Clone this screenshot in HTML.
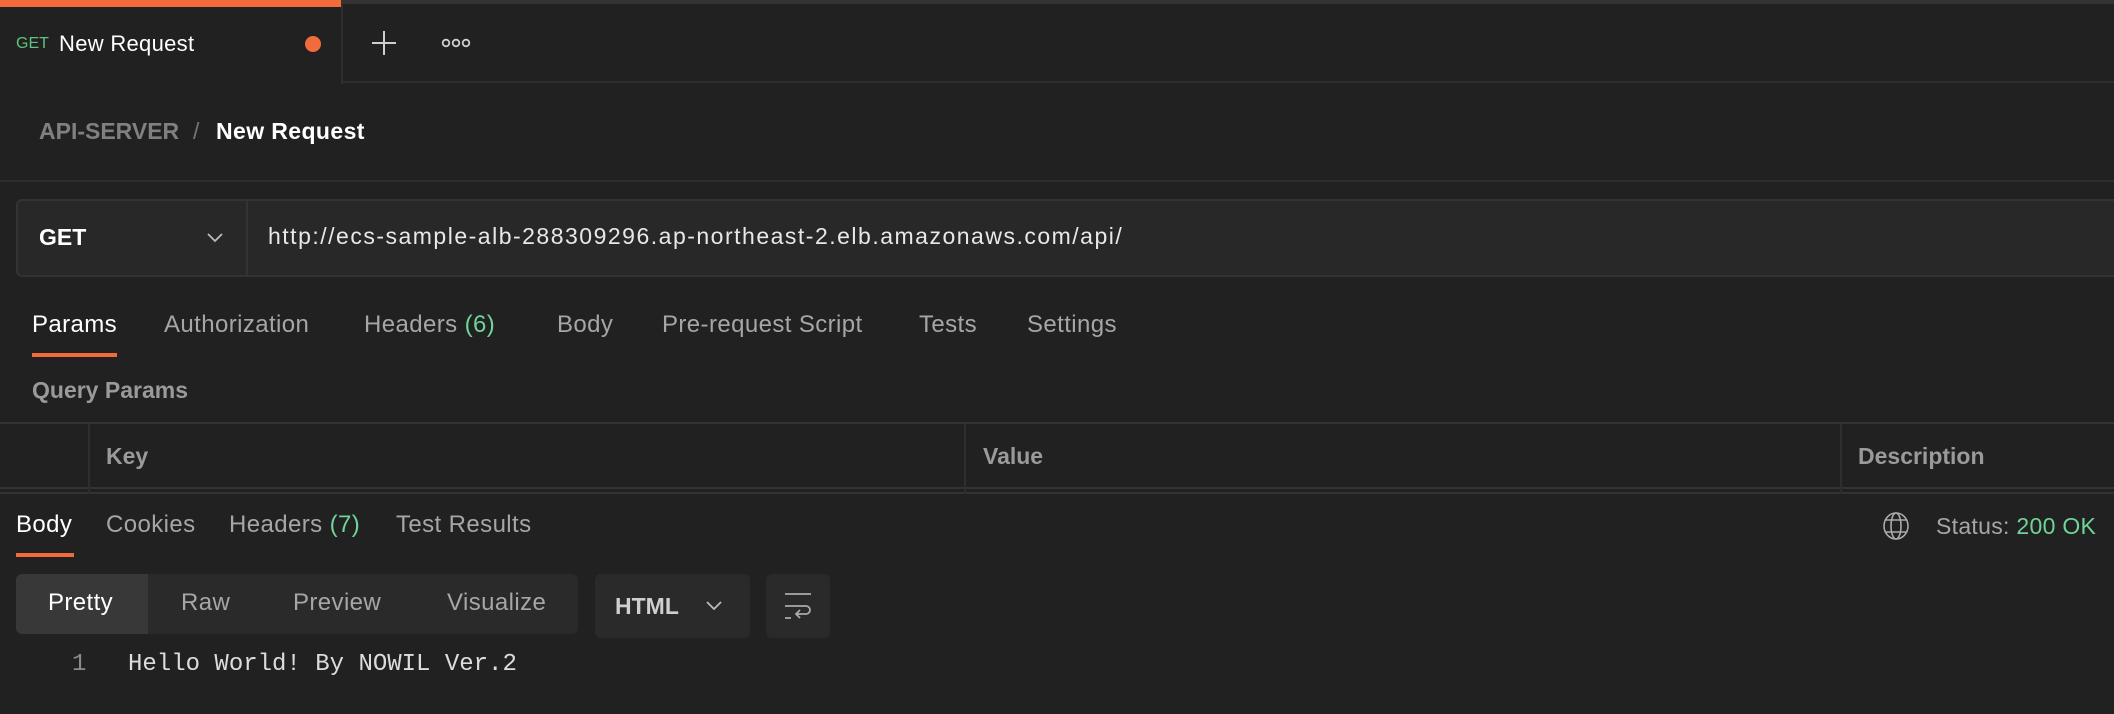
<!DOCTYPE html>
<html><head><meta charset="utf-8"><style>
*{margin:0;padding:0;box-sizing:border-box}
body{width:2114px;height:714px;background:#212121;font-family:"Liberation Sans",sans-serif;color:#a6a6a6;position:relative;overflow:hidden}
.a{position:absolute;white-space:nowrap}
.w{color:#fff}.g{color:#6fd497}
.t{font-size:24px;letter-spacing:0.4px}
</style></head><body>
<div class="a" style="left:0;top:0;width:2114px;height:4px;background:#333"></div>
<div class="a" style="left:0;top:0;width:341px;height:7px;background:#f26b3a"></div>
<div class="a" style="left:341px;top:4px;width:2px;height:80px;background:#2e2e2e"></div>
<div class="a" style="left:343px;top:81px;width:1771px;height:2px;background:#2e2e2e"></div>
<div class="a g" style="left:16px;top:35px;font-size:16px;color:#5fc27f">GET</div>
<div class="a w" style="left:59px;top:31px;font-size:22px;letter-spacing:0.3px">New Request</div>
<div class="a" style="left:305px;top:36px;width:16px;height:16px;border-radius:50%;background:#f26b3a"></div>
<svg class="a" style="left:371px;top:30px" width="26" height="26"><path d="M13 1V25M1 13H25" stroke="#cfcfcf" stroke-width="2"/></svg>
<svg class="a" style="left:441px;top:37px" width="30" height="12"><g fill="none" stroke="#cfcfcf" stroke-width="1.8"><circle cx="5" cy="6" r="3.3"/><circle cx="15" cy="6" r="3.3"/><circle cx="25" cy="6" r="3.3"/></g></svg>
<div class="a" style="left:39px;top:118px;font-size:23px;font-weight:bold;color:#808080">API-SERVER</div>
<div class="a" style="left:193px;top:118px;font-size:23px;color:#777">/</div>
<div class="a w" style="left:216px;top:118px;font-size:23px;font-weight:bold;letter-spacing:0.4px">New Request</div>
<div class="a" style="left:0;top:180px;width:2114px;height:2px;background:#2e2e2e"></div>
<div class="a" style="left:16px;top:199px;width:2120px;height:78px;background:#282828;border:2px solid #333;border-radius:6px"></div>
<div class="a" style="left:246px;top:201px;width:2px;height:74px;background:#333"></div>
<div class="a w" style="left:39px;top:224px;font-size:23px;font-weight:bold">GET</div>
<svg class="a" style="left:206px;top:232px" width="18" height="12"><path d="M2 2L9 9L16 2" fill="none" stroke="#bbb" stroke-width="1.8"/></svg>
<div class="a" style="left:268px;top:223px;font-size:23px;letter-spacing:1.5px;color:#e8e8e8">http://ecs-sample-alb-288309296.ap-northeast-2.elb.amazonaws.com/api/</div>
<div class="a t" style="top:311px;left:0;width:2114px">
<span class="a w" style="left:32px">Params</span>
<span class="a" style="left:164px">Authorization</span>
<span class="a" style="left:364px">Headers <span class="g">(6)</span></span>
<span class="a" style="left:557px">Body</span>
<span class="a" style="left:662px">Pre-request Script</span>
<span class="a" style="left:919px">Tests</span>
<span class="a" style="left:1027px">Settings</span>
</div>
<div class="a" style="left:32px;top:353px;width:85px;height:4px;background:#f26b3a"></div>
<div class="a" style="left:32px;top:377px;font-size:23px;font-weight:bold;color:#9a9a9a">Query Params</div>
<div class="a" style="left:0;top:422px;width:2114px;height:2px;background:#333"></div>
<div class="a" style="left:0;top:487px;width:2114px;height:2px;background:#333"></div>
<div class="a" style="left:0;top:492px;width:2114px;height:2px;background:#333"></div>
<div class="a" style="left:88px;top:424px;width:2px;height:70px;background:#2e2e2e"></div>
<div class="a" style="left:964px;top:424px;width:2px;height:70px;background:#2e2e2e"></div>
<div class="a" style="left:1840px;top:424px;width:2px;height:70px;background:#2e2e2e"></div>
<div class="a" style="left:106px;top:443px;font-size:23px;font-weight:bold;color:#9a9a9a">Key</div>
<div class="a" style="left:983px;top:443px;font-size:23px;font-weight:bold;color:#9a9a9a">Value</div>
<div class="a" style="left:1858px;top:443px;font-size:23px;font-weight:bold;color:#9a9a9a">Description</div>
<div class="a t" style="top:511px;left:0;width:2114px">
<span class="a w" style="left:16px">Body</span>
<span class="a" style="left:106px">Cookies</span>
<span class="a" style="left:229px">Headers <span class="g">(7)</span></span>
<span class="a" style="left:396px">Test Results</span>
</div>
<div class="a" style="left:16px;top:553px;width:58px;height:4px;background:#f26b3a"></div>
<svg class="a" style="left:1882px;top:511px" width="28" height="30"><g fill="none" stroke="#aaa" stroke-width="1.6"><ellipse cx="14" cy="15" rx="12" ry="13"/><ellipse cx="14" cy="15" rx="5" ry="13"/><path d="M4 9H24M4 21H24"/></g></svg>
<div class="a" style="left:1936px;top:513px;font-size:23px;letter-spacing:0.3px">Status: <span class="g">200 OK</span></div>
<div class="a" style="left:16px;top:574px;width:562px;height:60px;background:#2a2a2a;border-radius:6px"></div>
<div class="a" style="left:16px;top:574px;width:132px;height:60px;background:#383838;border-radius:6px 0 0 6px"></div>
<div class="a t" style="top:589px;left:0">
<span class="a w" style="left:48px">Pretty</span>
<span class="a" style="left:181px">Raw</span>
<span class="a" style="left:293px">Preview</span>
<span class="a" style="left:447px">Visualize</span>
</div>
<div class="a" style="left:595px;top:574px;width:155px;height:64px;background:#2a2a2a;border-radius:6px"></div>
<div class="a" style="left:615px;top:593px;font-size:23px;font-weight:bold;color:#cfcfcf">HTML</div>
<svg class="a" style="left:705px;top:600px" width="18" height="12"><path d="M2 2L9 9L16 2" fill="none" stroke="#bbb" stroke-width="1.8"/></svg>
<div class="a" style="left:766px;top:574px;width:64px;height:64px;background:#2a2a2a;border-radius:6px"></div>
<svg class="a" style="left:782px;top:591px" width="32" height="32"><g fill="none" stroke="#aaa" stroke-width="1.8"><path d="M3 3H29M3 15H24a4 4 0 0 1 0 8H14M18 19L14 23L18 27M3 27H9"/></g></svg>
<div class="a" style="left:72px;top:651px;font-family:'Liberation Mono',monospace;font-size:24px;color:#8a8a8a">1</div>
<div class="a" style="left:128px;top:651px;font-family:'Liberation Mono',monospace;font-size:24px;color:#dcdcdc">Hello World! By NOWIL Ver.2</div>
</body></html>
